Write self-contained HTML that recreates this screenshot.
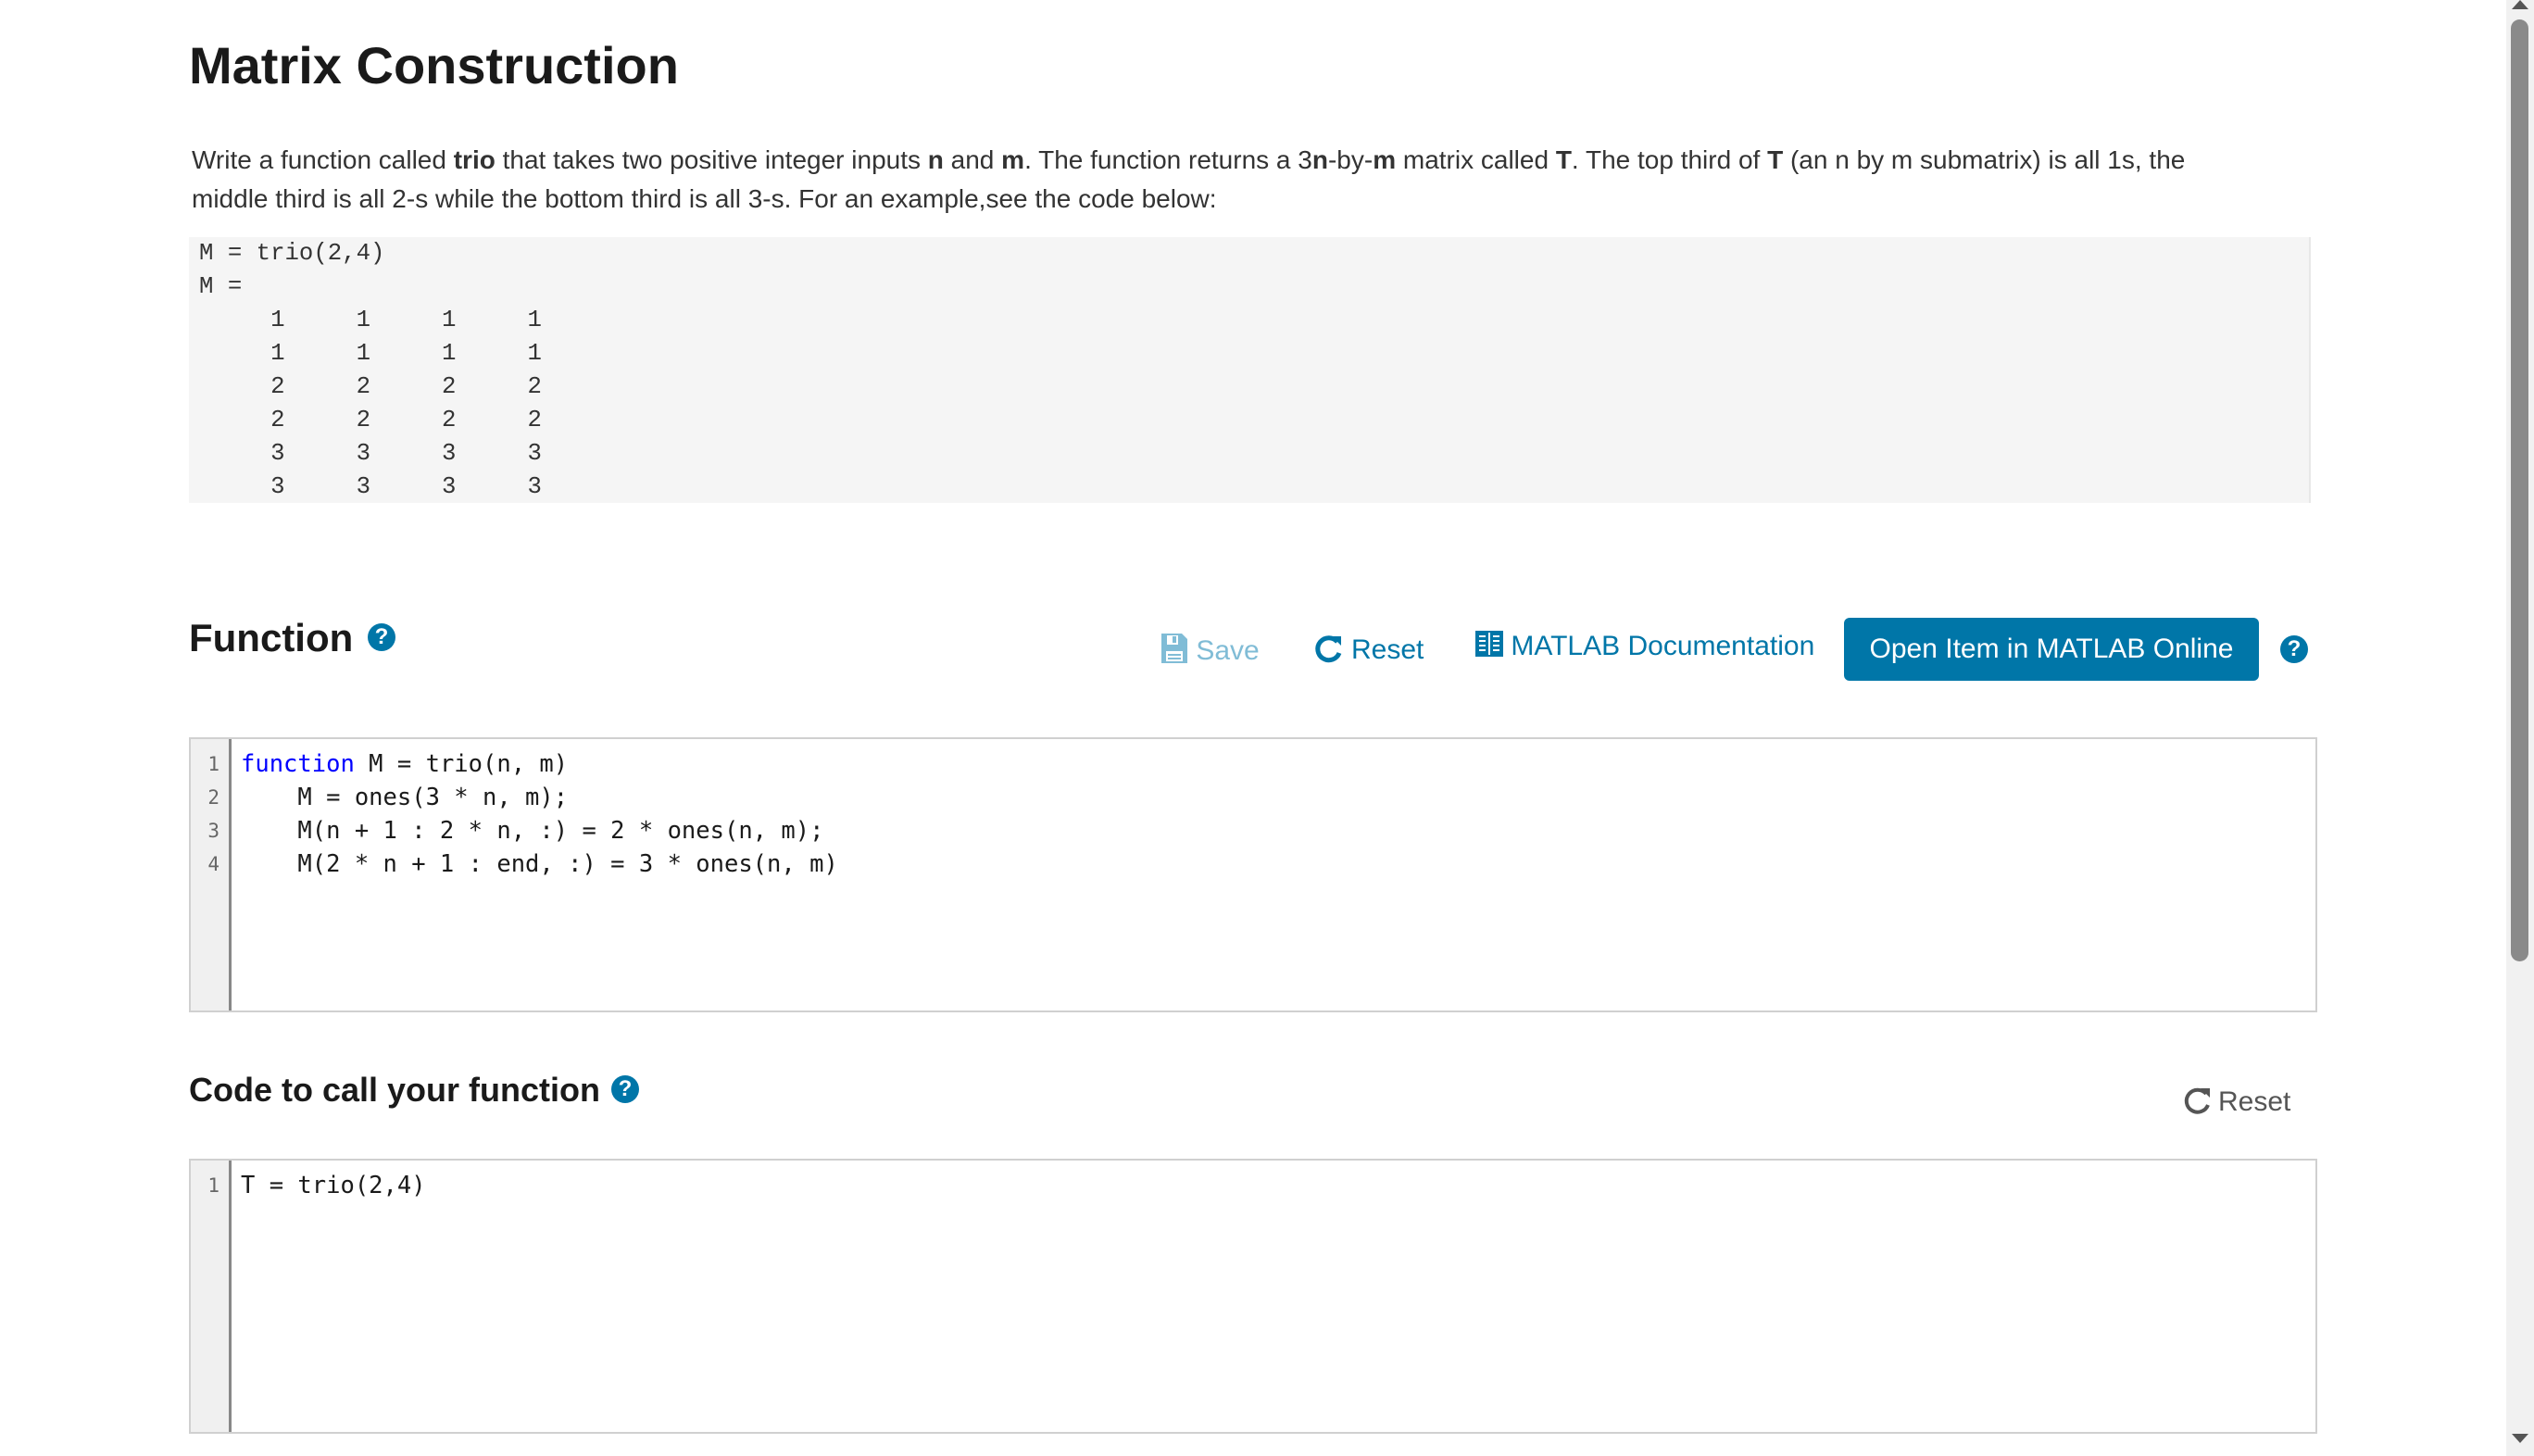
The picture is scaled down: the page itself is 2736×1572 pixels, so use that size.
<!DOCTYPE html>
<html><head><meta charset="utf-8"><style>
*{margin:0;padding:0;box-sizing:border-box}
body{width:2736px;height:1572px;overflow:hidden;background:#fff;font-family:"Liberation Sans",Arial,sans-serif;color:#1a1a1a;position:relative}
.abs{position:absolute}
h1{position:absolute;left:204px;top:38px;font-size:56px;font-weight:bold;color:#1a1a1a}
.p{left:207px;top:152px;width:2185px;font-size:28px;line-height:42px;color:#333}
.pre{left:204px;top:256px;width:2291px;height:287px;background:#f5f5f5;border-right:2px solid #e8e8e8;font-family:"Liberation Mono",monospace;font-size:25.7px;line-height:36px;color:#333;padding:0 0 0 11px;white-space:pre}
h2{position:absolute;font-weight:bold;color:#1a1a1a}
.q{display:inline-block;width:30px;height:30px;border-radius:50%;background:#0076a8;color:#fff;font-size:24px;font-weight:bold;text-align:center;line-height:30px;vertical-align:middle}
.btn{font-size:30px;color:#0076a8}
.ed{left:204px;width:2298px;height:297px;border:2px solid #d0d0d0;background:#fff}
.gut{position:absolute;left:0;top:0;bottom:0;width:44px;background:#f0f0f0;border-right:3px solid #888;font-family:"DejaVu Sans Mono",monospace;font-size:21px;line-height:36px;color:#666;text-align:right;padding:9px 10px 0 0}
.code{position:absolute;left:54px;top:9px;font-family:"DejaVu Sans Mono",monospace;font-size:25.5px;line-height:36px;color:#1a1a1a;white-space:pre}
.kw{color:#0000ff}
</style></head><body>
<h1>Matrix Construction</h1>
<div class="abs p">Write a function called <b>trio</b> that takes two positive integer inputs <b>n</b> and <b>m</b>. The function returns a 3<b>n</b>-by-<b>m</b> matrix called <b>T</b>. The top third of <b>T</b> (an n by m submatrix) is all 1s, the middle third is all 2-s while the bottom third is all 3-s. For an example,see the code below:</div>
<div class="abs pre">M = trio(2,4)
M =
     1     1     1     1
     1     1     1     1
     2     2     2     2
     2     2     2     2
     3     3     3     3
     3     3     3     3</div>
<h2 style="left:204px;top:665px;font-size:42px">Function <span class="q" style="margin-left:4px;margin-top:-8px">?</span></h2>
<div class="abs btn" style="left:1253px;top:683px;color:#80bcd6"><svg width="30" height="34" viewBox="0 0 30 34" style="vertical-align:-5px"><path d="M1 1h22l6 6v26H1z" fill="#80bcd6"/><rect x="7" y="3" width="12" height="10" fill="#fff"/><rect x="13" y="4" width="4" height="7" fill="#80bcd6"/><rect x="6" y="20" width="18" height="11" fill="#fff"/><rect x="8" y="23" width="14" height="2" fill="#80bcd6"/><rect x="8" y="27" width="14" height="2" fill="#80bcd6"/></svg> Save</div>
<div class="abs btn" style="left:1419px;top:683px"><svg width="32" height="34" viewBox="0 0 32 34" style="vertical-align:-6px;margin-right:8px"><path d="M25 10A12 12 0 1 0 27 22" fill="none" stroke="#0076a8" stroke-width="5"/><path d="M19 4l10 0 0 10z" fill="#0076a8"/></svg>Reset</div>
<div class="abs btn" style="left:1593px;top:679px"><svg width="30" height="32" viewBox="0 0 30 32" style="vertical-align:-4px"><rect x="0" y="2" width="30" height="28" fill="#0076a8"/><g fill="#fff"><rect x="4" y="7" width="7" height="2"/><rect x="4" y="12" width="7" height="2"/><rect x="4" y="17" width="7" height="2"/><rect x="4" y="22" width="7" height="2"/><rect x="19" y="7" width="7" height="2"/><rect x="19" y="12" width="7" height="2"/><rect x="19" y="17" width="7" height="2"/><rect x="19" y="22" width="7" height="2"/><rect x="14" y="4" width="2" height="24"/></g></svg> MATLAB Documentation</div>
<div class="abs" style="left:1991px;top:667px;width:448px;height:68px;background:#0076a8;border-radius:6px;color:#fff;font-size:30px;text-align:center;line-height:68px">Open Item in MATLAB Online</div>
<div class="abs" style="left:2462px;top:686px"><span class="q">?</span></div>
<div class="abs ed" style="top:796px"><div class="gut">1<br>2<br>3<br>4</div><div class="code"><span class="kw">function</span> M = trio(n, m)
    M = ones(3 * n, m);
    M(n + 1 : 2 * n, :) = 2 * ones(n, m);
    M(2 * n + 1 : end, :) = 3 * ones(n, m)</div></div>
<h2 style="left:204px;top:1156px;font-size:36px">Code to call your function <span class="q" style="margin-left:2px;margin-top:-6px">?</span></h2>
<div class="abs btn" style="left:2357px;top:1171px;color:#555"><svg width="32" height="34" viewBox="0 0 32 34" style="vertical-align:-6px;margin-right:6px"><path d="M25 10A12 12 0 1 0 27 22" fill="none" stroke="#555" stroke-width="4"/><path d="M19 4l10 0 0 10z" fill="#555"/></svg>Reset</div>
<div class="abs ed" style="top:1251px"><div class="gut">1</div><div class="code">T = trio(2,4)</div></div>
<div class="abs" style="left:2706px;top:0;width:30px;height:1572px;background:#f1f1f1"></div>
<div class="abs" style="left:2711px;top:21px;width:19px;height:1017px;background:#8a8a8a;border-radius:10px"></div>
<div class="abs" style="left:2712px;top:0;width:0;height:0;border:9px solid transparent;border-bottom:10px solid #555;border-top:0"></div>
<div class="abs" style="left:2712px;top:1548px;width:0;height:0;border:9px solid transparent;border-top:10px solid #555;border-bottom:0"></div>
</body></html>
